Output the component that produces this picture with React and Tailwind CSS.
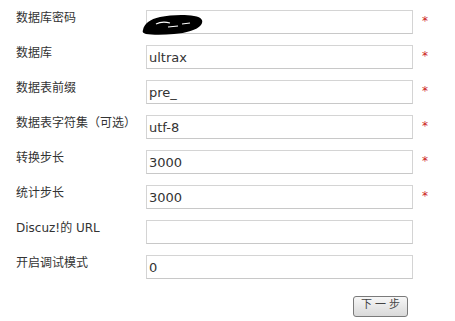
const ROWS = [
  { label: '数据库密码', value: '', required: true, masked: true },
  { label: '数据库', value: 'ultrax', required: true },
  { label: '数据表前缀', value: 'pre_', required: true },
  { label: '数据表字符集（可选）', value: 'utf-8', required: true },
  { label: '转换步长', value: '3000', required: true },
  { label: '统计步长', value: '3000', required: true },
  { label: 'Discuz!的 URL', value: '', required: false },
  { label: '开启调试模式', value: '0', required: false },
];

const FONT = { fontFamily: '"DejaVu Sans", "Noto Sans CJK SC", sans-serif' };

function Scribble() {
  // redaction mark drawn over the password field
  return (
    <svg
      className="absolute left-[-5px] top-[2px] pointer-events-none"
      width="62"
      height="22"
      viewBox="0 0 62 22"
    >
      <path
        d="M1 17 C2 11 8 6 18 4 C28 2 42 1 52 3 C60 4 62 8 59 12 C55 17 44 20 32 21 C22 22 10 22 4 21 C1 20 0 19 1 17 Z"
        fill="#000"
      />
      <path d="M14 11 C18 9 24 9 28 10" stroke="#fff" strokeWidth="1.2" fill="none" />
      <path d="M26 14 L36 13" stroke="#fff" strokeWidth="1.2" />
      <path d="M40 11 L48 10" stroke="#fff" strokeWidth="1.2" />
    </svg>
  );
}

function Row({ label, value, required, masked }) {
  return (
    <div className="flex items-start h-[24px]">
      <div className="w-[130px] shrink-0 pt-[1px] text-[12px] leading-[14px] text-[#333]">{label}</div>
      <div className="relative w-[267px] h-[24px] border border-[#d4d4d4] border-b-[#c8c8c8] bg-white flex items-center pl-[2px] pt-[2px] text-[13px] text-[#333]">
        {value}
        {masked && <Scribble />}
      </div>
      {required && (
        <span className="ml-[9px] pt-[4px] text-[12px] leading-[14px] text-[#cc2222]">*</span>
      )}
    </div>
  );
}

export default function App() {
  return (
    <div className="w-[455px] h-[321px] bg-white overflow-hidden" style={FONT}>
      <div className="flex flex-col gap-[11px] pt-[10px] pl-[16px]">
        {ROWS.map((r) => (
          <Row key={r.label} {...r} />
        ))}
      </div>
      <div className="flex pl-[353px] pt-[17px]">
        <button className="w-[55px] h-[21px] rounded-[3px] border border-[#7a7a7a] bg-gradient-to-b from-[#f7f7f7] to-[#d9d9d9] flex items-center justify-center whitespace-nowrap text-[11px] leading-[12px] text-[#444]">
          <span className="-mt-[3px] tracking-[3px] pl-[3px]">下一步</span>
        </button>
      </div>
    </div>
  );
}
